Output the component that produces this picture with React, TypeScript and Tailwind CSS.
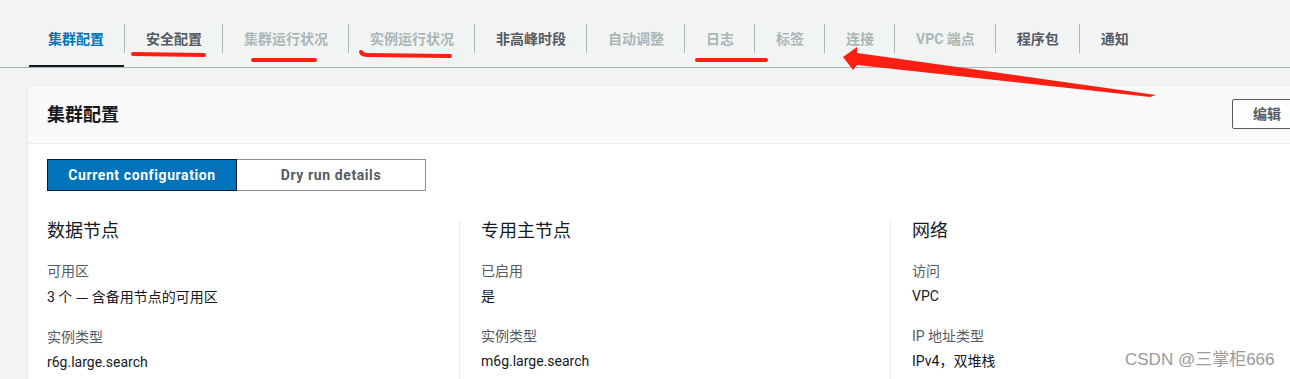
import React from "react";

type Tab = { label: string; state: "active" | "enabled" | "disabled" };

const tabs: Tab[] = [
  { label: "集群配置", state: "active" },
  { label: "安全配置", state: "enabled" },
  { label: "集群运行状况", state: "disabled" },
  { label: "实例运行状况", state: "disabled" },
  { label: "非高峰时段", state: "enabled" },
  { label: "自动调整", state: "disabled" },
  { label: "日志", state: "disabled" },
  { label: "标签", state: "disabled" },
  { label: "连接", state: "disabled" },
  { label: "VPC 端点", state: "disabled" },
  { label: "程序包", state: "enabled" },
  { label: "通知", state: "enabled" },
];

const columns = [
  {
    title: "数据节点",
    items: [
      { k: "可用区", v: "3 个 — 含备用节点的可用区" },
      { k: "实例类型", v: "r6g.large.search" },
    ],
  },
  {
    title: "专用主节点",
    items: [
      { k: "已启用", v: "是" },
      { k: "实例类型", v: "m6g.large.search" },
    ],
  },
  {
    title: "网络",
    items: [
      { k: "访问", v: "VPC" },
      { k: "IP 地址类型", v: "IPv4，双堆栈" },
    ],
  },
];

function Value({ text }: { text: string }) {
  if (text.includes("—")) {
    const [a, b] = text.split("—");
    return (
      <>
        {a}
        <span style={{ fontFamily: '"Noto Sans CJK SC", sans-serif' }}>—</span>
        {b}
      </>
    );
  }
  return <>{text}</>;
}

export default function App() {
  return (
    <div
      className="relative w-[1290px] h-[379px] overflow-hidden bg-[#f2f3f3]"
      style={{ fontFamily: 'Roboto, "Noto Sans CJK SC", sans-serif' }}
    >
      {/* Tabs */}
      <div className="flex pl-[29px] pt-[24px] border-b border-[#aab7b8] w-[1290px]">
        {tabs.map((t, i) => (
          <div key={t.label} className="flex flex-col h-[43px]">
            <div
              className={
                "h-[29px] flex items-center text-[14px] font-bold leading-none whitespace-nowrap " +
                (i > 0 ? "border-l border-[#aab7b8] pl-[21px] pr-[20px] " : "pl-[19px] pr-[20px] ") +
                (t.state === "active"
                  ? "text-[#0073bb]"
                  : t.state === "enabled"
                  ? "text-[#545b64]"
                  : "text-[#aab7b8]")
              }
            >
              {t.label}
            </div>
            <div className="flex-1" />
            {t.state === "active" ? (
              <div className="h-[2px] bg-[#16191f]" />
            ) : (
              <div className="h-[2px]" />
            )}
          </div>
        ))}
      </div>

      {/* Card */}
      <div className="ml-[27px] mt-[17px] w-[1295px] h-[320px] bg-white border-l border-t border-[#eaeded]">
        <div className="h-[58px] bg-[#fafafa] border-b border-[#eaeded] flex items-center justify-between pl-[19px] pr-5">
          <div className="text-[18px] font-bold text-[#16191f] leading-none">集群配置</div>
          <button className="h-[30px] -mt-[1px] px-5 border border-[#545b64] rounded-[2px] bg-white text-[14px] font-bold text-[#545b64] leading-none">
            编辑
          </button>
        </div>

        <div className="pl-[19px] pr-5 pt-[15px]">
          <div className="flex">
            <div className="w-[190px] h-[32px] flex items-center justify-center bg-[#0073bb] border border-[#16191f] text-white text-[14px] font-bold tracking-[0.6px]">
              Current configuration
            </div>
            <div className="w-[189px] h-[32px] flex items-center justify-center bg-white border border-l-0 border-[#879596] text-[#545b64] text-[14px] font-bold tracking-[0.6px]">
              Dry run details
            </div>
          </div>

          <div className="grid grid-cols-[412px_431px_1fr] mt-[29px]">
            {columns.map((c, i) => (
              <div
                key={c.title}
                className={i > 0 ? "border-l border-[#eaeded] pl-[21px] pb-[40px]" : "pb-[40px]"}
              >
                <div className="text-[18px] leading-[22px] text-[#16191f]">{c.title}</div>
                {c.items.map((it, j) => (
                  <div key={it.k} className={j === 0 ? "mt-[19px]" : "mt-[20px]"}>
                    <div className="text-[14px] leading-[20px] text-[#545b64]">{it.k}</div>
                    <div className="mt-[5px] text-[14px] leading-[20px] text-[#16191f]">
                      <Value text={it.v} />
                    </div>
                  </div>
                ))}
              </div>
            ))}
          </div>
        </div>
      </div>

      {/* Watermark */}
      <div
        className="absolute left-[1125px] top-[349px] text-[17px] leading-[22px] text-[#9a9a9a] whitespace-nowrap"
        style={{ fontFamily: '"Liberation Sans", "Noto Sans CJK SC", sans-serif' }}
      >
        CSDN @三掌柜666
      </div>

      {/* Red annotations */}
      <svg
        className="absolute left-0 top-0 pointer-events-none"
        width="1290"
        height="379"
        viewBox="0 0 1290 379"
      >
        <g stroke="#ff1f12" strokeWidth="4" strokeLinecap="round" fill="none">
          <path d="M133 54 L204 55" />
          <path d="M253 60 L315 60" />
          <path d="M361 52 Q362 55 368 55 L450 56" />
          <path d="M697 60 L766 60" />
        </g>
        <polygon
          fill="#ff1f12"
          points="843,57 857,47 857,53 1156,95 1150,97 857,65 853,70"
        />
      </svg>
    </div>
  );
}
